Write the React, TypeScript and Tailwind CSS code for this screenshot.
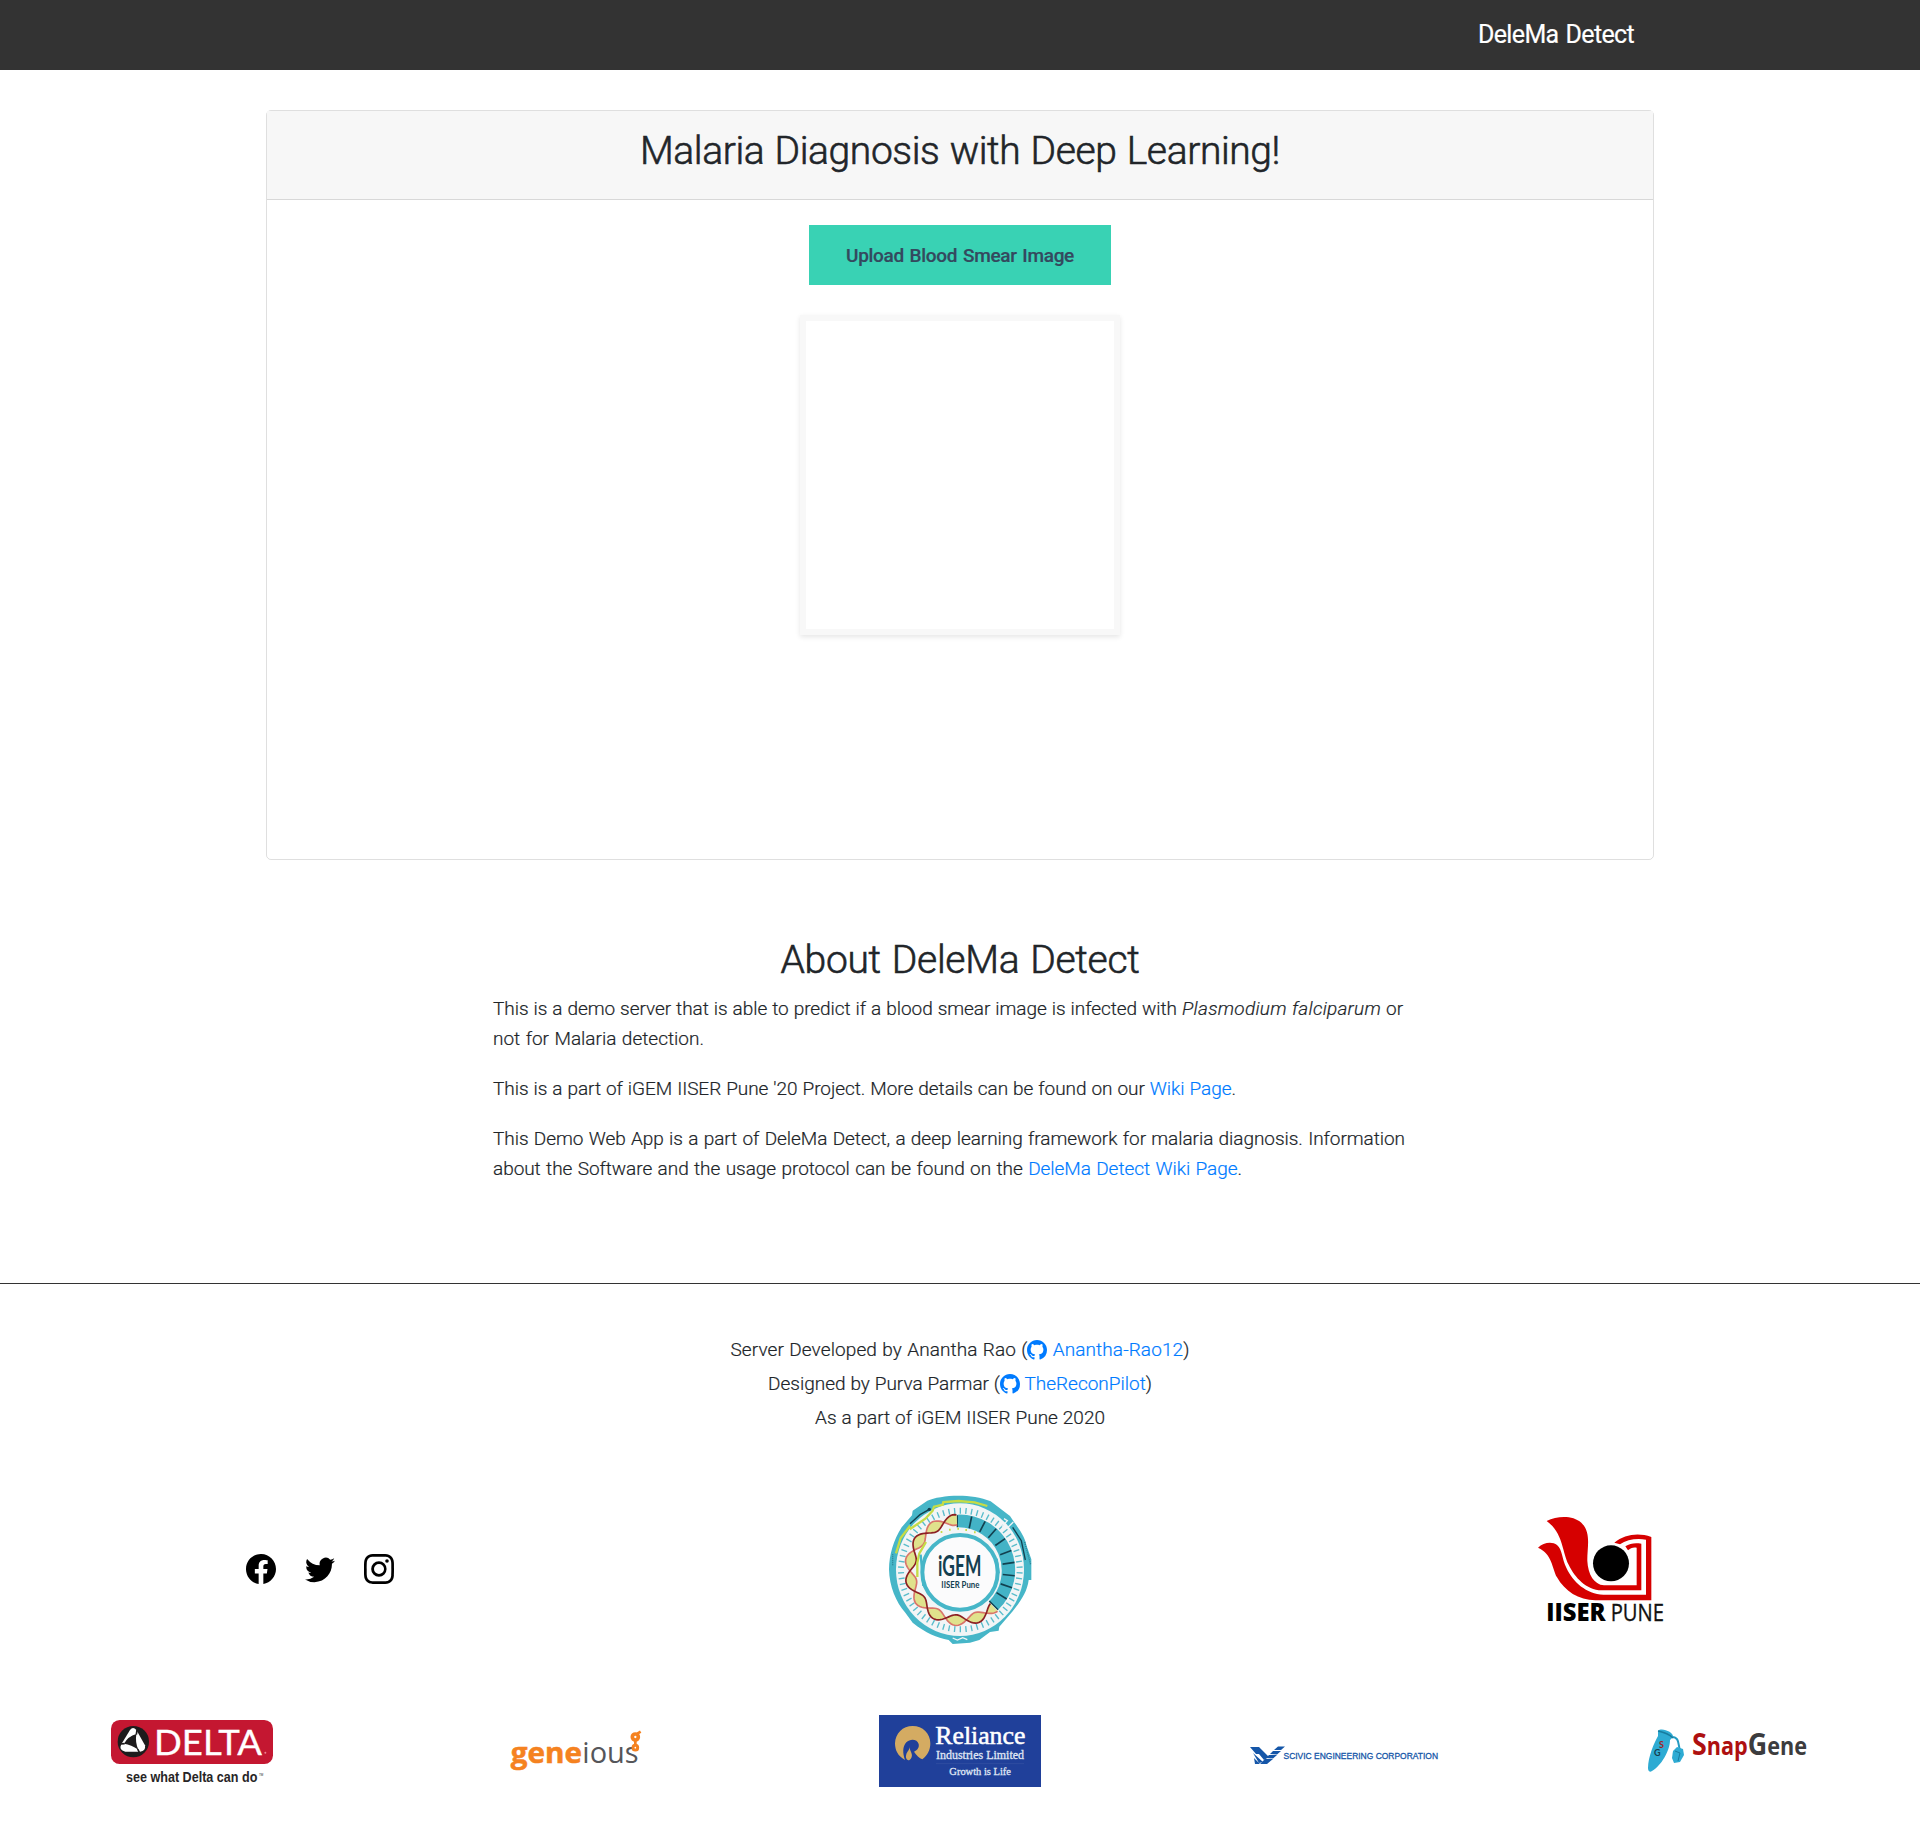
import type { ReactNode } from "react";
import { BsFacebook, BsGithub, BsInstagram, BsTwitter } from "react-icons/bs";

function Line({ className, children }: { className: string; children: ReactNode }) {
  return <span className={`block whitespace-nowrap [text-align-last:justify] ${className}`}>{children}</span>;
}

const CX = 241;
const CY = 252;

function polar(r: number, deg: number) {
  const a = (deg * Math.PI) / 180;
  return { x: CX + r * Math.sin(a), y: CY - r * Math.cos(a) };
}

function strand(phase: number) {
  let d = "";
  for (let deg = 138; deg <= 356; deg += 2) {
    const t = ((deg - 149) / 24) * Math.PI + phase;
    const p = polar(151 + 16 * Math.sin(t), deg);
    d += `${d ? "L" : "M"}${p.x.toFixed(1)} ${p.y.toFixed(1)}`;
  }
  return d;
}

function back(phase: number) {
  return strand(phase).slice(1).split("L").reverse().join("L");
}

function IgemLogo() {
  const spokes = [12, 27, 41, 55, 69, 82, 96, 109, 122];
  const ticks = Array.from({ length: 66 }, (_, i) => i * (360 / 66));
  return (
    <svg className="h-[170px] w-[160px]" viewBox="0 0 480 510">
      <path
        d="M142 44C180 28 270 20 332 46L390 90L402 108C428 142 436 160 440 180L454 220V282H446C442 318 420 348 398 376L358 422L356 434L330 438L298 462L270 470L218 474L206 462C170 454 138 442 98 410L76 380C48 350 28 300 27 250C28 206 40 164 65 124L96 88L98 74Z"
        fill="#46b6c8"
      />
      <ellipse cx="240" cy="251" rx="192" ry="199" fill="#f2f5f6" />
      {ticks.map((deg) => {
        const a = polar(169, deg);
        const b = polar(187, deg);
        return <line key={deg} x1={a.x} y1={a.y} x2={b.x} y2={b.y} stroke="#58bccb" strokeWidth="4" />;
      })}
      <path d="M232 86A166 166 0 0 1 354 372L326 347A130 130 0 0 0 232 124Z" fill="#43b3c6" />
      {spokes.map((deg) => {
        const a = polar(128, deg);
        const b = polar(164, deg);
        return <line key={deg} x1={a.x} y1={a.y} x2={b.x} y2={b.y} stroke="#12404f" strokeWidth="5" />;
      })}
      <path d="M232 88V124M328 345L354 371" stroke="#12404f" strokeWidth="4" />
      <path d={`${strand(0)}L${back(Math.PI)}Z`} fill="#e0e28c" />
      <path d={strand(Math.PI)} fill="none" stroke="#d9756a" strokeWidth="5" />
      <path d={strand(0)} fill="none" stroke="#8c2023" strokeWidth="5" />
      <path d="M48 202L62 156L88 122L92 128L136 98L158 74L162 62L188 56L190 48L236 45L284 49L322 60" fill="none" stroke="#c6dc45" strokeWidth="7" />
      <path d="M112 273V230L118 202L138 168" fill="none" stroke="#c6dc45" strokeWidth="7" />
      <path d="M182 138h5M207 131h5M232 128h5M256 132h5M282 139h5" stroke="#c6dc45" strokeWidth="6" />
      <path d="M90 113L120 86L148 70M398 124L424 164L436 222" fill="none" stroke="#12404f" strokeWidth="4" />
      <circle cx="148" cy="70" r="5" fill="#12404f" />
      <path d="M366 122L382 104L372 98M384 124L400 108" fill="none" stroke="#f2f5f6" strokeWidth="4" />
      <path d="M38 205V238M434 168L452 236" stroke="#287f91" strokeWidth="4" strokeDasharray="3 3" />
      <path d="M218 456L232 462L248 455L262 461" fill="none" stroke="#f2f5f6" strokeWidth="4" />
      <ellipse cx="240" cy="259" rx="113" ry="112" fill="#fbfbfc" stroke="#46b6c8" strokeWidth="12" />
      <path d="M122 206L130 300M350 218L356 262" stroke="#46b6c8" strokeWidth="7" />
      <text x="174" y="269" fontFamily="Lato, sans-serif" fontWeight="700" fontSize="84" textLength="130" lengthAdjust="spacingAndGlyphs" fill="#143f50">iGEM</text>
      <text x="184" y="306" fontFamily="Lato, sans-serif" fontWeight="700" fontSize="30" textLength="114" lengthAdjust="spacingAndGlyphs" fill="#143f50">IISER Pune</text>
    </svg>
  );
}

function IiserLogo() {
  return (
    <svg className="h-[140px] w-40" viewBox="0 0 480 420">
      <path d="M80 60C112 44 158 42 184 65C215 95 201 140 202 180C204 220 222 251 252 253H350V140C340 138 331 141 324 148L316 136C330 127 345 125 364 128V268H245C198 266 165 230 146 191C126 153 130 96 80 60Z" fill="#d60000" />
      <path d="M54 140C70 124 97 121 111 132C128 147 125 172 139 200C159 244 199 278 250 281H378V116C350 111 320 116 300 130L283 125C314 101 353 94 394 108V298H226C176 298 134 270 111 229C96 202 97 158 54 140Z" fill="#d60000" />
      <circle cx="273" cy="187" r="54" fill="#000" />
      <text x="79" y="360" fontFamily="Open Sans, sans-serif" fontWeight="800" fontSize="72" textLength="178" lengthAdjust="spacingAndGlyphs" fill="#000">IISER</text>
      <text x="272" y="360" fontFamily="Open Sans, sans-serif" fontWeight="400" fontSize="72" textLength="160" lengthAdjust="spacingAndGlyphs" fill="#111" stroke="#111" strokeWidth="1">PUNE</text>
    </svg>
  );
}

function DeltaLogo() {
  return (
    <svg className="h-20 w-[190px]" viewBox="-9 0 570 240">
      <rect x="33" y="27" width="486" height="132" rx="26" fill="#c41731" />
      <circle cx="100" cy="92" r="47" fill="#1d1b1c" />
      <path d="M90 57Q99 45 109 57L135 103Q138 121 120 122H76Q55 118 64 100Z" fill="#fff" />
      <path d="M72 98Q84 76 109 69Q105 94 115 116Q94 101 72 98Z" fill="#1d1b1c" />
      <path d="M109 71L111 57M74 98L61 99M113 114L118 124" stroke="#1d1b1c" strokeWidth="5" />
      <text x="162" y="131" fontFamily="Lato, sans-serif" fontWeight="400" fontSize="106" textLength="324" lengthAdjust="spacingAndGlyphs" fill="#fff" stroke="#fff" strokeWidth="1">DELTA</text>
      <circle cx="496" cy="125" r="3" fill="#eb8291" />
      <text x="78" y="213" fontFamily="Liberation Sans, sans-serif" fontWeight="700" fontSize="44" textLength="394" lengthAdjust="spacingAndGlyphs" fill="#272526">see what Delta can do</text>
      <text x="477" y="194" fontFamily="Liberation Sans, sans-serif" fontSize="9" fill="#272526">TM</text>
    </svg>
  );
}

function GeneiousLogo() {
  return (
    <svg className="h-[60px] w-[150px]" viewBox="3 0 450 180">
      <text x="32" y="125" fontFamily="Open Sans, sans-serif" fontWeight="700" fontSize="86" textLength="214" lengthAdjust="spacingAndGlyphs" fill="#f58220" stroke="#f58220" strokeWidth="1.5">gene</text>
      <text x="247" y="125" fontFamily="Open Sans, sans-serif" fontWeight="400" fontSize="86" textLength="169" lengthAdjust="spacingAndGlyphs" fill="#55565a">ious</text>
      <circle cx="406" cy="48" r="9" fill="none" stroke="#f58220" strokeWidth="11" />
      <circle cx="406" cy="80" r="7" fill="#fff" stroke="#f58220" strokeWidth="9" />
      <path d="M412 38L422 32M406 59V71" stroke="#f58220" strokeWidth="8" />
    </svg>
  );
}

function RelianceLogo() {
  return (
    <svg className="h-[90px] w-[180px]" viewBox="0 0 540 270">
      <rect x="27" y="27" width="486" height="216" fill="#20409a" />
      <path d="M105 162C83 150 75 132 75 112C76 82 98 60 128 60C158 60 181 82 181 112C181 132 173 148 157 160C148 157 139 148 132 137C143 133 148 124 146 114C142 99 121 97 109 109C97 122 98 143 105 162Z" fill="#d4ab62" />
      <path d="M119 121C118 136 129 142 125 153C123 160 118 163 115 163C108 161 106 153 109 145C111 137 119 133 119 121Z" fill="#d4ab62" />
      <text x="196" y="114" fontFamily="Liberation Serif, serif" fontSize="74" textLength="270" lengthAdjust="spacingAndGlyphs" fill="#fff" stroke="#fff" strokeWidth="1.5">Reliance</text>
      <text x="198" y="159" fontFamily="Liberation Serif, serif" fontSize="35" textLength="264" lengthAdjust="spacingAndGlyphs" fill="#dfe4f3" stroke="#dfe4f3" strokeWidth="1">Industries Limited</text>
      <path d="M198 173H462" stroke="#3653a5" strokeWidth="2" />
      <text x="238" y="208" fontFamily="Liberation Serif, serif" fontSize="31" textLength="185" lengthAdjust="spacingAndGlyphs" fill="#dfe4f3" stroke="#dfe4f3" strokeWidth="1">Growth is Life</text>
    </svg>
  );
}

function ScivicLogo() {
  return (
    <svg className="h-[70px] w-[200px] overflow-visible" viewBox="1244 1715 200 70">
      <g fill="#1556a8">
        <path d="M1250 1746H1259L1269 1756L1264 1759L1259 1753L1256 1753Z" />
        <path d="M1274 1749L1278 1745.500H1285L1281 1749ZM1270 1753L1273 1750H1281L1277 1753.500ZM1266 1757L1269 1754H1277L1273 1757.500ZM1260 1763L1265 1758H1273L1267 1763Z" />
        <path d="M1253 1752L1263 1761L1259 1762ZM1254 1757L1260 1763H1255Z" />
      </g>
      <text x="1283.500" y="1758" fontFamily="Liberation Sans, sans-serif" fontSize="9.300" textLength="154.500" lengthAdjust="spacingAndGlyphs" fill="#1556a8" stroke="#1556a8" strokeWidth=".3">SCIVIC ENGINEERING CORPORATION</text>
    </svg>
  );
}

function SnapGeneLogo() {
  return (
    <svg className="h-[70px] w-[170px]" viewBox="1643 1715 170 70">
      <path d="M1671 1736C1680 1735 1678 1745 1680 1749" fill="none" stroke="#249bc2" strokeWidth="2" />
      <path d="M1658 1730C1661 1726 1674 1731 1673 1736L1670 1739C1670 1750 1661 1765 1652 1770C1649 1772 1648 1769 1648 1767C1648 1756 1654 1742 1658 1735Z" fill="#2eabd3" />
      <path d="M1658 1730C1663 1731 1670 1734 1673 1737" fill="none" stroke="#187c9f" strokeWidth="1.500" />
      <path d="M1677 1746L1683 1748L1684 1754L1680 1761L1674 1762L1672 1757L1673 1750Z" fill="#2eabd3" />
      <path d="M1675 1750L1680 1752L1678 1760" fill="none" stroke="#187c9f" />
      <text x="1659" y="1747" fontFamily="Lato, sans-serif" fontWeight="700" fontSize="9" fill="#a51e24">S</text>
      <text x="1654" y="1755" fontFamily="Lato, sans-serif" fontWeight="700" fontSize="9" fill="#173d4b">G</text>
      <text x="1692" y="1754" fontFamily="Open Sans, sans-serif" fontWeight="700" fontSize="25" textLength="115" lengthAdjust="spacingAndGlyphs" fill="#ae1010">
        <tspan fontSize="31">S</tspan>nap<tspan fontSize="31" fill="#3c3c3e">G</tspan><tspan fill="#3c3c3e">ene</tspan>
      </text>
    </svg>
  );
}

function Profile({ name }: { name: string }) {
  return (
    <a href="#" className="text-[#007bff]">
      <BsGithub className="inline size-5 align-[-4px]" /> {name}
    </a>
  );
}

export default function App() {
  return (
    <div className="min-h-[1846px] bg-white font-['Roboto',sans-serif] text-[19px] leading-[30px] font-light text-[#212529] [-webkit-text-stroke-width:0.2px]">
      <nav className="flex h-[70px] justify-end bg-[#333] pr-[286px]">
        <a href="#" className="w-[156px] pt-[17px] text-[25px] leading-9 font-normal text-white">
          <Line className="tracking-[-0.65px]">DeleMa Detect</Line>
        </a>
      </nav>

      <main>
        <section className="mx-auto mt-10 h-[750px] w-[1388px] rounded-[5px] border border-black/[.125]">
          <header className="flex h-[89px] justify-center border-b border-black/[.125] bg-[#f7f7f7] pt-4">
            <h1 className="w-[640px] text-[39px] leading-[48px] [-webkit-text-stroke-width:0.6px]">
              <Line className="tracking-[-0.4px]">Malaria Diagnosis with Deep Learning!</Line>
            </h1>
          </header>
          <div className="flex flex-col items-center pt-[25px]">
            <button className="h-[60px] w-[302px] bg-[#39d2b4] px-[37px] pt-px text-[19px] font-medium text-[#34495e]">
              <Line className="tracking-[-0.3px]">Upload Blood Smear Image</Line>
            </button>
            <div className="mt-[30px] size-80 border-[6px] border-[#f8f8f8] shadow-[0_2px_5px_rgba(0,0,0,0.1)]" />
          </div>
        </section>

        <section className="mx-auto mt-[76px] w-[934px]">
          <h2 className="mx-auto w-[359px] text-[39px] leading-[48px] [-webkit-text-stroke-width:0.6px]">
            <Line className="tracking-[-0.3px]">About DeleMa Detect</Line>
          </h2>
          <p className="mt-[10px]">
            <Line className="w-[910px] tracking-[-0.05px]">
              This is a demo server that is able to predict if a blood smear image is infected with{" "}
              <em className="tracking-[0.25px]">Plasmodium falciparum</em> or
            </Line>
            <Line className="w-[211px] tracking-[0px]">not for Malaria detection.</Line>
          </p>
          <p className="mt-5">
            <Line className="w-[743px] tracking-[-0.05px]">
              This is a part of iGEM IISER Pune '20 Project. More details can be found on our <a href="#" className="text-[#007bff]">Wiki Page</a>.
            </Line>
          </p>
          <p className="mt-5">
            <Line className="w-[912px] tracking-[-0.05px]">
              This Demo Web App is a part of DeleMa Detect, a deep learning framework for malaria diagnosis. Information
            </Line>
            <Line className="w-[749px] tracking-[-0.05px]">
              about the Software and the usage protocol can be found on the <a href="#" className="text-[#007bff]">DeleMa Detect Wiki Page</a>.
            </Line>
          </p>
        </section>
      </main>

      <footer className="mt-[99px] border-t border-[#333] pt-[49px] [&_svg]:[-webkit-text-stroke-width:0]">
        <div className="flex flex-col items-center leading-[34px]">
          <Line className="h-[34px] w-[459px] tracking-[0.1px]">Server Developed by Anantha Rao (<Profile name="Anantha-Rao12" />)</Line>
          <Line className="h-[34px] w-[384px] tracking-[0px]">Designed by Purva Parmar (<Profile name="TheReconPilot" />)</Line>
          <Line className="h-[34px] w-[290px] tracking-[0px]">As a part of iGEM IISER Pune 2020</Line>
        </div>
        <div className="mt-[51px] grid h-[170px] grid-cols-3 place-items-center">
          <div className="mb-1 flex gap-[29px] text-black">
            <BsFacebook className="size-[30px]" />
            <BsTwitter className="size-[30px]" />
            <BsInstagram className="size-[30px]" />
          </div>
          <IgemLogo />
          <IiserLogo />
        </div>
        <div className="mt-[50px] grid h-[90px] grid-cols-5 place-items-center">
          <DeltaLogo />
          <GeneiousLogo />
          <RelianceLogo />
          <ScivicLogo />
          <SnapGeneLogo />
        </div>
      </footer>
    </div>
  );
}
